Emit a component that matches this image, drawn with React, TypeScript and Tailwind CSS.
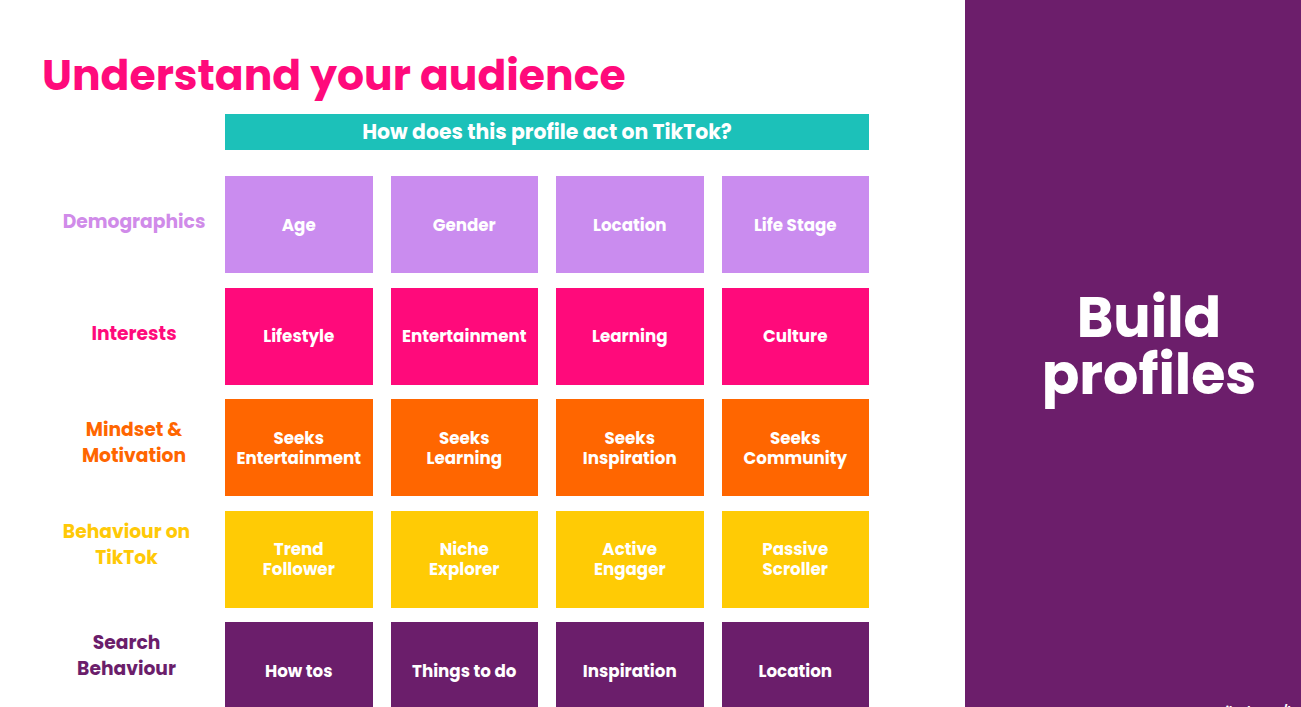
import React from "react";

const rows = [
  {
    label: ["Demographics"],
    labelColor: "text-[#d08be9]",
    box: "bg-[#ca8cef]",
    offset: "pt-[33px] pr-[7px]",
    items: [["Age"], ["Gender"], ["Location"], ["Life Stage"]],
  },
  {
    label: ["Interests"],
    labelColor: "text-[#ff0a7b]",
    box: "bg-[#ff0a7b]",
    offset: "pt-[33px] pr-[7px]",
    items: [["Lifestyle"], ["Entertainment"], ["Learning"], ["Culture"]],
  },
  {
    label: ["Mindset &", "Motivation"],
    labelColor: "text-[#ff6600]",
    box: "bg-[#ff6600]",
    offset: "pt-[18px] pr-[7px]",
    items: [
      ["Seeks", "Entertainment"],
      ["Seeks", "Learning"],
      ["Seeks", "Inspiration"],
      ["Seeks", "Community"],
    ],
  },
  {
    label: ["Behaviour on", "TikTok"],
    labelColor: "text-[#ffc907]",
    box: "bg-[#ffcb05]",
    offset: "pt-[8px] pr-[22px]",
    items: [
      ["Trend", "Follower"],
      ["Niche", "Explorer"],
      ["Active", "Engager"],
      ["Passive", "Scroller"],
    ],
  },
  {
    label: ["Search", "Behaviour"],
    labelColor: "text-[#6b1e6b]",
    box: "bg-[#6b1e6b]",
    offset: "pt-[8px] pr-[22px]",
    items: [["How tos"], ["Things to do"], ["Inspiration"], ["Location"]],
  },
];

export default function App() {
  return (
    <div
      className="relative flex h-[707px] w-[1301px] overflow-hidden bg-white"
      style={{ fontFamily: "Poppins, Inter, 'Noto Sans', sans-serif" }}
    >
      <div className="flex w-[965px] shrink-0 flex-col">
        <h1 className="ml-[42px] mt-[52px] shrink-0 text-[42.5px] font-bold leading-[46px] text-[#ff0a7b]">
          Understand your audience
        </h1>
        <div className="ml-[225px] mt-[16px] flex h-[36px] w-[644px] shrink-0 items-center justify-center bg-[#1cc1b9] text-[20.4px] font-bold text-white">
          How does this profile act on TikTok?
        </div>
        <div className="mt-[26px] flex shrink-0 flex-col gap-[14.5px]">
          {rows.map((r, i) => (
            <div key={i} className="flex shrink-0">
              <div
                className={`ml-[50px] w-[175px] shrink-0 text-center text-[18.7px] font-bold leading-[26px] ${r.labelColor} ${r.offset}`}
              >
                {r.label.map((l, j) => (
                  <div key={j}>{l}</div>
                ))}
              </div>
              <div className="grid w-[644px] grid-cols-4 gap-[18px]">
                {r.items.map((it, j) => (
                  <div
                    key={j}
                    className={`flex h-[97px] flex-col items-center justify-center text-center text-[16.7px] font-bold leading-[20px] text-white ${r.box}`}
                  >
                    {it.map((t, k) => (
                      <div key={k}>{t}</div>
                    ))}
                  </div>
                ))}
              </div>
            </div>
          ))}
        </div>
      </div>
      <div className="relative flex flex-1 items-center justify-center bg-[#6c1e6b] pl-[32px] pb-[16px]">
        <div className="text-center text-[55.5px] font-bold leading-[57px] text-white">
          <div>Build</div>
          <div>profiles</div>
        </div>
        <div className="absolute bottom-[-9px] right-[6px] text-[11px] font-bold leading-[12px] text-white">
          tiktok.com/b
        </div>
      </div>
    </div>
  );
}
